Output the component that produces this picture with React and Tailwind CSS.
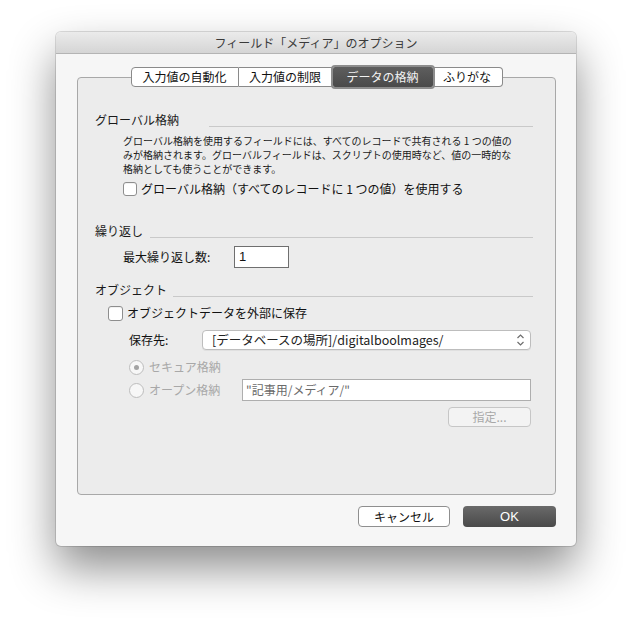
import React from "react";

const font = { fontFamily: '"Noto Sans CJK JP", "Noto Sans", sans-serif' };

function Checkbox({ size = 14 }) {
  return (
    <span
      className="inline-block shrink-0 rounded-[3px] border border-[#8e8e8e] bg-white shadow-[inset_0_1px_0_rgba(0,0,0,0.05)]"
      style={{ width: size, height: size }}
    />
  );
}

function Radio({ checked }) {
  return (
    <span className="flex h-[15px] w-[15px] shrink-0 items-center justify-center rounded-full border border-[#bdbdbd] bg-[#f7f7f7]">
      {checked && <span className="h-[5px] w-[5px] rounded-full bg-[#a3a3a3]" />}
    </span>
  );
}

function Heading({ children, gap }) {
  return (
    <div className="flex h-[16px] items-end">
      <span className="text-[12px] leading-[16px] text-[#1a1a1a] whitespace-nowrap">{children}</span>
      <span className="mb-[1px] flex-1 border-b border-[#c9c9c9]" style={{ marginLeft: gap }} />
    </div>
  );
}

export default function App() {
  return (
    <div className="h-[626px] w-[632px] bg-white pl-[56px] pt-[32px]" style={font}>
      <div className="flex h-[514px] w-[520px] flex-col overflow-hidden rounded-[5px] bg-[#f6f6f6] shadow-[0_22px_45px_rgba(0,0,0,0.45),0_0_0_1px_rgba(0,0,0,0.13)]">
        {/* title bar */}
        <div className="flex h-[22px] shrink-0 items-center justify-center border-b border-[#b4b4b4] bg-gradient-to-b from-[#ebebeb] to-[#d5d5d5]">
          <span className="text-[12px] leading-none text-[#3a3a3a]">フィールド「メディア」のオプション</span>
        </div>

        {/* group box */}
        <div className="ml-[21px] mr-[20px] mt-[23px] flex h-[418px] flex-col rounded-[4px] border border-[#a8a8a8] bg-[#ececec]">
          {/* tabs */}
          <div className="-mt-[11px] flex justify-center">
            <div className="flex h-[20px] items-stretch">
              <div className="flex w-[108px] items-center justify-center rounded-l-[4px] border border-[#8a8a8a] bg-white text-[12px] text-[#111]">入力値の自動化</div>
              <div className="flex w-[94px] items-center justify-center border-y border-r border-[#8a8a8a] bg-white text-[12px] text-[#111]">入力値の制限</div>
              <div className="relative z-10 flex w-[100px] items-center justify-center rounded-[2px] bg-gradient-to-b from-[#5e5e5e] to-[#4a4a4a] text-[12px] text-[#f2f2f2] shadow-[0_0_0_2px_#8d8d8d]">データの格納</div>
              <div className="flex w-[70px] items-center justify-center rounded-r-[4px] border-y border-r border-[#8a8a8a] bg-white text-[12px] text-[#111]">ふりがな</div>
            </div>
          </div>

          <div className="flex flex-col pl-[17px] pr-[22px]">
            {/* global */}
            <div className="mt-[25px]">
              <Heading gap={30}>グローバル格納</Heading>
            </div>
            <div className="ml-[28px] mt-[6px] text-[10px] leading-[14px] text-[#1a1a1a] whitespace-nowrap">
              グローバル格納を使用するフィールドには、すべてのレコードで共有される 1 つの値の
              <br />
              みが格納されます。グローバルフィールドは、スクリプトの使用時など、値の一時的な
              <br />
              格納としても使うことができます。
            </div>
            <div className="ml-[28px] mt-[5px] flex h-[16px] items-center gap-[4px]">
              <Checkbox />
              <span className="text-[12px] leading-[16px] text-[#111] whitespace-nowrap">グローバル格納（すべてのレコードに 1 つの値）を使用する</span>
            </div>

            {/* repeat */}
            <div className="mt-[26px]">
              <Heading gap={7}>繰り返し</Heading>
            </div>
            <div className="ml-[28px] mt-[7px] flex h-[22px] items-center">
              <span className="w-[111px] text-[12px] text-[#111]">最大繰り返し数:</span>
              <div className="flex h-[22px] w-[55px] items-center border border-[#6f6f6f] bg-white pl-[4px] text-[13px] text-[#111]" style={{ fontFamily: '"Liberation Sans", Arial, sans-serif' }}>1</div>
            </div>

            {/* object */}
            <div className="mt-[14px]">
              <Heading gap={6}>オブジェクト</Heading>
            </div>
            <div className="ml-[13px] mt-[7px] flex h-[16px] items-center gap-[4px]">
              <Checkbox size={15} />
              <span className="text-[12px] leading-[16px] text-[#111] whitespace-nowrap">オブジェクトデータを外部に保存</span>
            </div>
            <div className="ml-[34px] mt-[9px] flex h-[20px] items-center">
              <span className="w-[73px] text-[12px] text-[#111]">保存先:</span>
              <div className="flex h-[20px] w-[329px] items-center rounded-[4px] border border-[#bdbdbd] bg-white pl-[9px] pr-[5px] shadow-[0_1px_0_rgba(0,0,0,0.05)]">
                <span className="flex-1 text-[12.5px] leading-none text-[#222] whitespace-nowrap">[データベースの場所]/digitalboolmages/</span>
                <svg width="9" height="14" viewBox="0 0 9 14" fill="none" stroke="#6d6d6d" strokeWidth="1.2">
                  <path d="M1.5 5 L4.5 2 L7.5 5" />
                  <path d="M1.5 9 L4.5 12 L7.5 9" />
                </svg>
              </div>
            </div>
            <div className="ml-[34px] mt-[9px] flex h-[16px] items-center gap-[5px]">
              <Radio checked />
              <span className="text-[12px] leading-[16px] text-[#a8a8a8]">セキュア格納</span>
            </div>
            <div className="ml-[34px] mt-[4px] flex h-[22px] items-center">
              <div className="flex w-[113px] items-center gap-[5px]">
                <Radio />
                <span className="text-[12px] leading-[16px] text-[#a8a8a8]">オープン格納</span>
              </div>
              <div className="flex h-[22px] w-[289px] items-center border border-[#aeaeae] bg-white pl-[3px] text-[12px] text-[#6a6a6a] whitespace-nowrap">"記事用/メディア/"</div>
            </div>
            <div className="ml-[353px] mt-[6px] flex h-[20px] w-[83px] items-center justify-center rounded-[4px] border border-[#c6c6c6] bg-[#f3f3f3] text-[12px] text-[#a8a8a8]">
              指定...
            </div>
          </div>
        </div>

        {/* buttons */}
        <div className="mr-[20px] mt-[11px] flex justify-end gap-[13px]">
          <div className="flex h-[21px] w-[92px] items-center justify-center rounded-[4px] border border-[#8f8f8f] bg-white text-[12px] text-[#111]">キャンセル</div>
          <div className="flex h-[21px] w-[93px] items-center justify-center rounded-[4px] bg-gradient-to-b from-[#6a6a6a] to-[#4a4a4a] text-[13px] text-white" style={{ fontFamily: '"Liberation Sans", Arial, sans-serif' }}>OK</div>
        </div>
      </div>
    </div>
  );
}
